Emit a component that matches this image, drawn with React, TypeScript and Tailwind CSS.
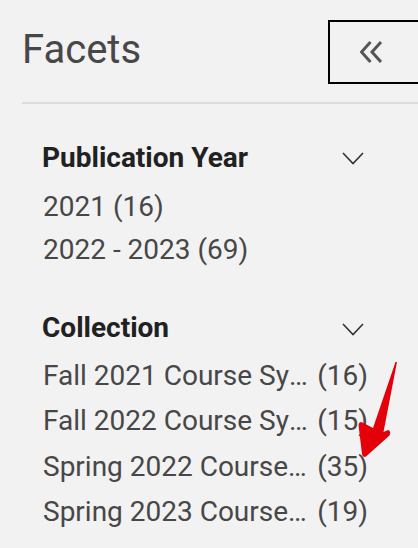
import React from "react";

const Chevron = () => (
  <svg width="22" height="13" viewBox="0 0 22 13" className="mr-[4px] mt-[2px]">
    <polyline points="1,1 11,11.5 21,1" fill="none" stroke="#333" strokeWidth="1.6" />
  </svg>
);

const pubYears = [
  { label: "2021", count: 16 },
  { label: "2022 - 2023", count: 69 },
];

const collections = [
  { label: "Fall 2021 Course Syllabi", count: 16 },
  { label: "Fall 2022 Course Syllabi", count: 15 },
  { label: "Spring 2022 Course Syllabi", count: 35 },
  { label: "Spring 2023 Course Syllabi", count: 19 },
];

export default function App() {
  return (
    <div
      className="relative w-[418px] h-[548px] overflow-hidden bg-[#f2f2f2]"
      style={{ fontFamily: "Roboto, 'Noto Sans', sans-serif" }}
    >
      <div className="pl-[22px]">
        <div className="flex items-start justify-between">
          <h1 className="mt-[30px] text-[40px] leading-[40px] font-normal text-[#474747]">Facets</h1>
          <button className="mt-[20px] mr-[-20px] w-[110px] h-[64px] border-2 border-black flex items-center pl-[30px]">
            <svg width="24" height="24" viewBox="0 0 24 24">
              <polyline points="10.5,2 1.5,12 10.5,22" fill="none" stroke="#555" strokeWidth="3" />
              <polyline points="21,2 12,12 21,22" fill="none" stroke="#555" strokeWidth="3" />
            </svg>
          </button>
        </div>
        <div className="mt-[18px] h-[2px] bg-[#dcdcdc]" />
      </div>

      <div className="pl-[42px] pr-[50px]">
        <section className="mt-[37.7px]">
          <div className="flex items-center justify-between h-[32px]">
            <h2 className="text-[28px] leading-[32px] font-bold text-[#212121]">Publication Year</h2>
            <Chevron />
          </div>
          <ul className="mt-[11px]">
            {pubYears.map((p) => (
              <li key={p.label} className="text-[28px] leading-[43.3px] text-[#474747] px-[1px]">
                {p.label} ({p.count})
              </li>
            ))}
          </ul>
        </section>

        <section className="mt-[41px]">
          <div className="flex items-center justify-between h-[32px]">
            <h2 className="text-[28px] leading-[32px] font-bold text-[#212121]">Collection</h2>
            <Chevron />
          </div>
          <ul className="mt-[8.3px]">
            {collections.map((c) => (
              <li key={c.label} className="flex text-[28px] leading-[45.5px] text-[#474747] pl-[1px]">
                <span className="flex-1 min-w-0 truncate">{c.label}</span>
                <span className="ml-[8px] shrink-0">({c.count})</span>
              </li>
            ))}
          </ul>
        </section>
      </div>

      <svg
        className="absolute left-0 top-0 pointer-events-none"
        width="418"
        height="548"
        viewBox="0 0 418 548"
      >
        <defs>
          <linearGradient id="arrowGrad" x1="0" y1="0" x2="1" y2="1">
            <stop offset="0" stopColor="#f2000a" />
            <stop offset="1" stopColor="#d8000a" />
          </linearGradient>
        </defs>
        <path
          d="M397,362 L383.5,432 L388,430 Q391.5,431 389.5,435.5 L366,456.5 Q362.5,458 362,454 L358.5,425 Q359,421 362.5,422.5 L373,428 L395.5,362 Z"
          fill="url(#arrowGrad)"
        />
      </svg>
    </div>
  );
}
